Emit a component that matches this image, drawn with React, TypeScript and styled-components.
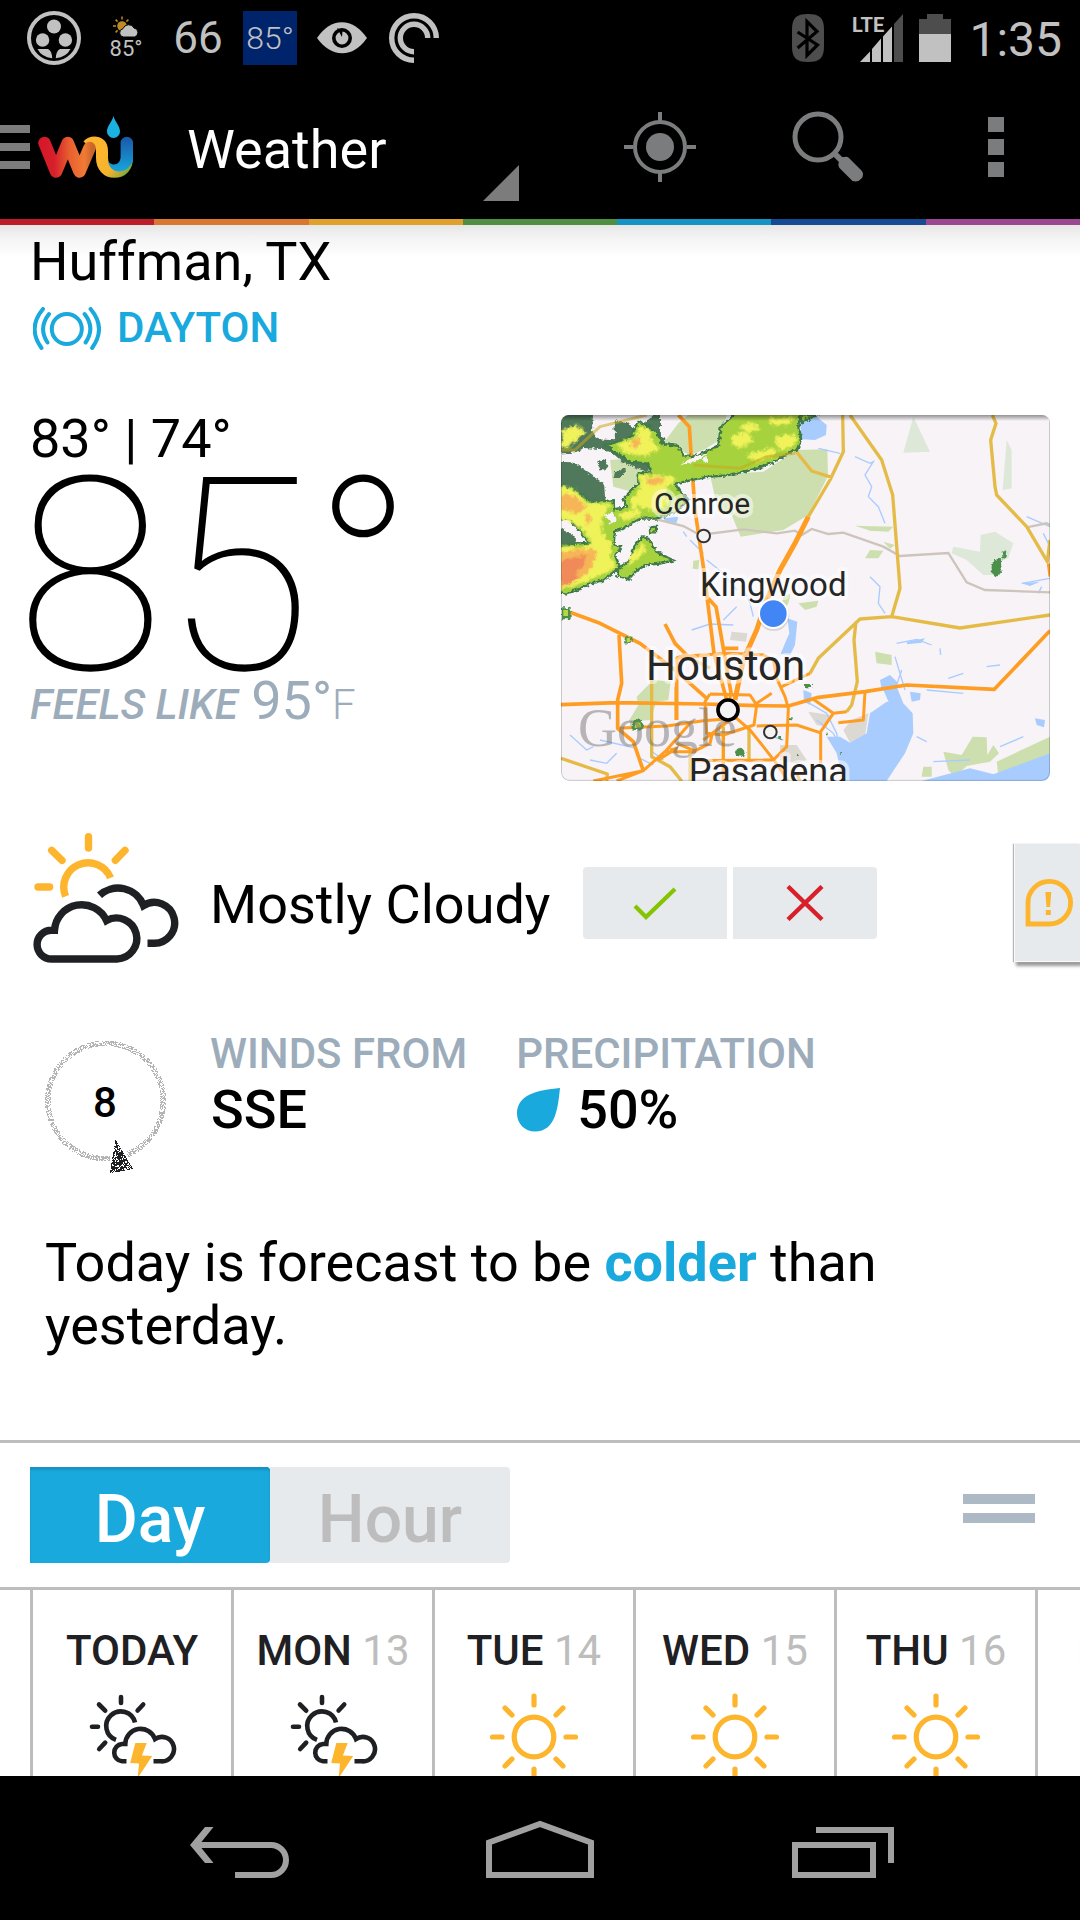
import React, { useState } from "react";
import styled, { createGlobalStyle } from "styled-components";

const GlobalStyle = createGlobalStyle`
  * { box-sizing: border-box; }
  html, body { margin: 0; padding: 0; }
  body {
    background: #fff;
    color: #000;
    font-family: Roboto, "Noto Sans", sans-serif;
  }
  button {
    font: inherit;
    color: inherit;
    border: 0;
    padding: 0;
    margin: 0;
    background: none;
    cursor: pointer;
  }
  svg { display: block; flex: none; }
  h1, h2, p, ul, dl, dd, dt { margin: 0; padding: 0; font-weight: inherit; }
`;

const color = {
  status: "#c1c1c1",
  dim: "#4d4d4d",
  action: "#7b7c7d",
  blue: "#19a9dd",
  slate: "#9dacba",
  panel: "#e6eaed",
  line: "#bdbdbd",
  ink: "#1f2023",
  sun: "#fdb52d",
  nav: "#a0a0a0",
};

/* ---------- layout ---------- */

const Page = styled.div`
  display: flex;
  flex-direction: column;
  height: 100vh;
  overflow: hidden;
`;

const StatusBar = styled.div`
  flex: none;
  display: flex;
  align-items: center;
  justify-content: space-between;
  height: 75px;
  padding: 0 18px 0 27px;
  background: #000;
  color: ${color.status};
`;

const Notifications = styled.div`
  display: flex;
  align-items: center;
  gap: 18px;
`;

const StatusSlot = styled.div<{ $fill?: string }>`
  display: flex;
  flex-direction: column;
  align-items: center;
  justify-content: center;
  width: 54px;
  height: 54px;
  background: ${(p) => p.$fill ?? "transparent"};
`;

const StatusText = styled.span<{ $size: number; $weight?: number }>`
  font-size: ${(p) => p.$size}px;
  line-height: ${(p) => p.$size}px;
  font-weight: ${(p) => p.$weight ?? 400};
  white-space: nowrap;
`;

const SystemIcons = styled.div`
  display: flex;
  align-items: center;
  gap: 16px;
`;

const BluetoothSlot = styled.div`
  margin-right: 12px;
`;

const Clock = styled.time`
  padding: 4px 0 0 2px;
  font-size: 48px;
  line-height: 48px;
`;

const AppBar = styled.header`
  flex: none;
  display: flex;
  height: 144px;
  background: #000;
  color: #fff;
`;

const HomeButton = styled.button`
  display: flex;
  align-items: center;
  gap: 8px;
  width: 187px;
`;

const Spinner = styled.button`
  flex: 1;
  display: flex;
  align-items: center;
  justify-content: space-between;
  margin-right: 57px;
`;

const SpinnerTitle = styled.span`
  padding-top: 5px;
  font-size: 54px;
  line-height: 64px;
`;

const SpinnerMark = styled.span`
  align-self: flex-end;
  margin-bottom: 18px;
  border-left: 36px solid transparent;
  border-bottom: 36px solid #7c7c7c;
`;

const Action = styled.button`
  flex: none;
  display: flex;
  align-items: center;
  justify-content: center;
  width: 168px;
  color: ${color.action};
`;

const Rainbow = styled.div`
  flex: none;
  display: flex;
  height: 6px;
`;

const Stripe = styled.span<{ $color: string }>`
  flex: 1;
  background: ${(p) => p.$color};
`;

const Main = styled.main`
  flex: 1;
  min-height: 0;
  overflow: hidden;
  background: linear-gradient(#e6e6e6, #f3f3f3 12px, #fff 32px);
`;

const Place = styled.section`
  padding: 5px 30px 0;
`;

const PlaceName = styled.h1`
  font-size: 54px;
  line-height: 64px;
`;

const Station = styled.a`
  display: flex;
  align-items: center;
  gap: 16px;
  width: max-content;
  margin-top: 12px;
  padding-left: 3px;
  font-size: 42px;
  line-height: 44px;
  font-weight: 500;
  color: ${color.blue};
  text-decoration: none;
`;

const Current = styled.section`
  display: flex;
  justify-content: space-between;
  align-items: flex-start;
  padding: 57px 30px 0;
`;

const HighLow = styled.p`
  font-size: 54px;
  line-height: 64px;
`;

/* The hanging indent cancels the wide side bearing of the first digit. */
const Temperature = styled.p`
  margin-top: 6px;
  font-size: 270px;
  line-height: 200px;
  font-weight: 100;
  text-indent: -14px;
`;

const FeelsLike = styled.p`
  font-size: 54px;
  line-height: 48px;
  color: ${color.slate};
`;

const FeelsLabel = styled.em`
  font-size: 42px;
  font-weight: 500;
`;

const Unit = styled.span`
  font-size: 42px;
  font-weight: 300;
`;

const MapButton = styled.button`
  margin-top: 8px;
  border-radius: 8px;
  overflow: hidden;
`;

const Conditions = styled.section`
  display: flex;
  align-items: center;
  height: 192px;
  padding: 52px 0 0 30px;
`;

const LeadColumn = styled.div`
  flex: none;
  align-self: flex-start;
  width: 180px;
`;

const Sky = styled.h2`
  padding-top: 4px;
  margin-right: 33px;
  font-size: 54px;
  line-height: 64px;
`;

const Votes = styled.div`
  display: flex;
  gap: 6px;
`;

const Vote = styled.button`
  display: flex;
  align-items: center;
  justify-content: center;
  width: 144px;
  height: 72px;
  background: ${color.panel};

  &:first-child { border-radius: 4px 0 0 4px; }
  &:last-child { border-radius: 0 4px 4px 0; }
`;

const AlertTab = styled.button`
  display: flex;
  align-items: center;
  width: 66px;
  height: 118px;
  margin-left: auto;
  padding-left: 10px;
  border-left: 1px solid #fafafa;
  border-bottom: 1px solid #fafafa;
  background: ${color.panel};
  box-shadow: -1px 0 1px #b5b5b5, 2px 4px 3px rgba(0, 0, 0, 0.4);
`;

const Details = styled.section`
  display: flex;
  align-items: flex-start;
  padding: 57px 30px 0;
`;

const CompassColumn = styled(LeadColumn)`
  padding: 10px 0 0 15px;
`;

const Facts = styled.dl`
  display: flex;
  gap: 49px;
`;

const FactLabel = styled.dt`
  font-size: 42px;
  line-height: 48px;
  font-weight: 500;
  color: ${color.slate};
`;

const FactValue = styled.dd`
  display: flex;
  align-items: center;
  gap: 16px;
  padding-left: 1px;
  font-size: 54px;
  line-height: 64px;
  font-weight: 500;
`;

const Forecast = styled.p`
  padding: 57px 45px 83px;
  font-size: 54px;
  line-height: 63px;
`;

const Change = styled.strong`
  font-weight: 700;
  color: ${color.blue};
`;

const RangeBar = styled.section`
  display: flex;
  align-items: center;
  justify-content: space-between;
  padding: 24px 45px 24px 30px;
  border-top: 3px solid ${color.line};
  border-bottom: 3px solid ${color.line};
`;

const Tabs = styled.div`
  display: flex;
`;

const Tab = styled.button<{ $active: boolean }>`
  width: 240px;
  height: 96px;
  padding-top: 9px;
  border-radius: 0 4px 4px 0;
  font-size: 66px;
  line-height: 78px;
  font-weight: 500;
  color: ${(p) => (p.$active ? "#fff" : color.line)};
  background: ${(p) => (p.$active ? color.blue : color.panel)};
  box-shadow: ${(p) => (p.$active ? "inset 0 3px 2px #1791c2" : "none")};
`;

const Handle = styled.button`
  display: grid;
  gap: 9px;
  width: 72px;
  margin-bottom: 14px;
`;

const HandleBar = styled.span`
  height: 10px;
  background: #adbac6;
`;

const Days = styled.ul`
  display: flex;
  overflow: hidden;
  padding-left: 30px;
  list-style: none;
`;

const Day = styled.li`
  flex: 0 0 201px;
  display: flex;
  flex-direction: column;
  align-items: center;
  gap: 17px;
  padding: 37px 0 54px;
  border-left: 3px solid ${color.line};
`;

const DayName = styled.span`
  font-size: 42px;
  line-height: 48px;
  font-weight: 500;
  color: ${color.ink};
  white-space: nowrap;
`;

const DayNumber = styled.span`
  font-weight: 400;
  color: ${color.line};
`;

const NavBar = styled.nav`
  flex: none;
  display: flex;
  height: 144px;
  padding: 0 90px;
  background: #000;
`;

const NavButton = styled.button`
  flex: 1;
  display: flex;
  align-items: center;
  justify-content: center;
`;

/* ---------- icons ---------- */

const ReelIcon = () => (
  <svg width="54" height="54" viewBox="0 0 54 54" fill={color.status}>
    <circle cx="27" cy="27" r="25" fill="none" stroke={color.status} strokeWidth="4" />
    <circle cx="27" cy="15.5" r="7" />
    <circle cx="15.6" cy="29" r="6.7" />
    <circle cx="38.4" cy="29" r="6.7" />
    <path d="M10.5 38H21q4 2 4.200 9.300Q14.500 46 10.500 38Z" />
    <path d="M43.500 38H33q-4 2-4.200 9.300Q39.500 46 43.500 38Z" />
  </svg>
);

const MiniWeatherIcon = () => (
  <svg width="26" height="22" viewBox="0 0 26 22">
    <circle cx="9" cy="10" r="4.800" fill="#c08a22" />
    <path
      d="M9 .5v3M2.600 3.600l2 2M0 10h3M15.400 3.600l-2 2M2.600 16.400l2-2"
      stroke="#c08a22"
      strokeWidth="1.500"
    />
    <path
      d="M10.500 21a4.200 4.200 0 0 1-.5-8.300 6 6 0 0 1 11-.7 4.600 4.600 0 0 1 .5 9Z"
      fill={color.status}
      stroke="#000"
    />
  </svg>
);

const EyeIcon = () => (
  <svg width="54" height="54" viewBox="0 0 54 54">
    <path d="M2 27Q13 11 27 11.300T52 27Q41 42.500 27 42.300T2 27Z" fill={color.status} />
    <circle cx="27" cy="27" r="8.200" fill={color.status} stroke="#000" strokeWidth="3.600" />
    <path d="M22 17l5 9 .5-6" fill="#000" />
  </svg>
);

const SwirlIcon = () => (
  <svg width="54" height="54" viewBox="0 0 54 54" fill="none" stroke={color.status} strokeWidth="5.400">
    <path d="M27 49.300A22.300 22.300 0 1 1 49.300 27" />
    <path d="M27 40.700A13.700 13.700 0 1 1 40.700 27" />
  </svg>
);

const BluetoothIcon = () => (
  <svg width="32" height="48" viewBox="0 0 32 48">
    <path d="M16 0C28 0 32 4 32 16v16c0 12-4 16-16 16S0 44 0 32V16C0 4 4 0 16 0Z" fill={color.dim} />
    <path d="M5.600 18 25.500 31 15 41.500v-34L25 17.500 5.600 34" fill="none" stroke="#000" strokeWidth="3.200" />
  </svg>
);

const SignalIcon = () => (
  <svg width="51" height="48" viewBox="0 0 51 48" fill={color.status}>
    <path d="M8 48 18 37.500V48ZM20 35l9-10.500V48h-9ZM31 22.500 40 12.500V48h-9Z" />
    <path d="M42 10 51 0v48h-9Z" fill={color.dim} />
    <text x="0" y="18" fontSize="20" fontWeight="700" fontFamily="Roboto, sans-serif">
      LTE
    </text>
  </svg>
);

const BatteryIcon = () => (
  <svg width="32" height="48" viewBox="0 0 32 48">
    <path d="M8 0h16v5h8v43H0V5h8Z" fill={color.dim} />
    <path d="M0 20h32v28H0Z" fill={color.status} />
  </svg>
);

const MenuLines = () => (
  <svg width="30" height="44" viewBox="0 0 30 44" fill="#7c7c7c">
    <path d="M0 0h30v8H0ZM0 18h30v8H0ZM0 36h30v8H0Z" />
  </svg>
);

const LogoIcon = () => (
  <svg width="96" height="78" viewBox="0 -8 96 78" fill="none" strokeLinecap="round" strokeLinejoin="round">
    <defs>
      <linearGradient id="wu-w" gradientUnits="userSpaceOnUse" x1="4" y1="0" x2="54" y2="0">
        <stop offset="0" stopColor="#d7182a" />
        <stop offset=".25" stopColor="#d7202c" />
        <stop offset=".55" stopColor="#e8602f" />
        <stop offset=".85" stopColor="#f07a35" />
        <stop offset="1" stopColor="#c9672a" />
      </linearGradient>
      <linearGradient id="wu-u" gradientUnits="userSpaceOnUse" x1="64" y1="30" x2="94" y2="54">
        <stop offset="0" stopColor="#fdb52d" />
        <stop offset=".55" stopColor="#f5b32e" />
        <stop offset=".85" stopColor="#a9a935" />
        <stop offset="1" stopColor="#5fae45" />
      </linearGradient>
      <linearGradient id="wu-b" x1="0" y1="0" x2="0" y2="1">
        <stop offset="0" stopColor="#1b57a8" />
        <stop offset="1" stopColor="#16a5dc" />
      </linearGradient>
    </defs>
    <path
      d="M50 29.500C53 26 64 23.500 64 35v7c0 8 5 13.800 12.500 13.800S89 50.500 89 42"
      stroke="url(#wu-u)"
      strokeWidth="12"
      strokeLinecap="butt"
    />
    <path d="M6.500 27 18 55.500 29.800 27 41.500 55.500 51.500 32" stroke="url(#wu-w)" strokeWidth="12.500" />
    <path
      d="M82.600 27a6.200 6.200 0 0 1 12.400 0v17.500C93 51 87 55.500 81 55.500 75 55.500 71 51 70 45c3 5.500 12.600 4.500 12.600-4Z"
      fill="url(#wu-b)"
    />
    <path d="M75.500 0c1.500 6 6.500 10 6.500 15.500a6.400 6.400 0 0 1-13 0C69 10 74 6 75.500 0Z" fill="#1bb2e2" />
  </svg>
);

const LocateIcon = () => (
  <svg width="72" height="72" viewBox="0 0 72 72" fill="none" stroke="currentColor" strokeWidth="4">
    <circle cx="36" cy="36" r="25" />
    <circle cx="36" cy="36" r="14" fill="currentColor" stroke="none" />
    <path d="M36 1v9M36 62v9M0 36h9M63 36h9" />
  </svg>
);

const SearchIcon = () => (
  <svg width="72" height="72" viewBox="0 0 72 72" fill="none" stroke="currentColor">
    <circle cx="26" cy="26" r="23" strokeWidth="5" />
    <path d="M42 42l8 8" strokeWidth="6" />
    <path
      d="M47 51q-1-5 5-5 3-1 5 1l12.500 12.500q3 4 0 8t-9 2.500L47.500 57q-2-3-.5-6Z"
      fill="currentColor"
      stroke="none"
    />
  </svg>
);

const OverflowIcon = () => (
  <svg width="16" height="60" viewBox="0 0 16 60" fill="currentColor">
    <path d="M0 0h16v15H0ZM0 22h16v16H0ZM0 45h16v15H0Z" />
  </svg>
);

const StationIcon = () => (
  <svg width="68" height="43" viewBox="0 0 68 43" fill="none" stroke={color.blue} strokeWidth="4" strokeLinecap="round">
    <circle cx="33.800" cy="22" r="15" />
    <path d="M16 7Q5 21 14.500 35.500M10 2Q-6 21 8.500 41M51.600 7q11 14 1 28.500M57.600 2q16 19 1.500 39" />
  </svg>
);

const MostlyCloudyIcon = () => (
  <svg width="150" height="130" viewBox="0 0 150 130" fill="none" strokeWidth="7.400">
    <path d="M80.500 44.800A24.200 24.200 0 1 0 35.600 63.300" stroke={color.sun} />
    <path
      d="M58.500 3.700V15M8 54h11.600M21.700 17.300l10.300 10M95 17.300l-9.600 10"
      stroke={color.sun}
      strokeLinecap="round"
    />
    <path
      d="M21.500 126a14.400 14.400 0 0 1 0-28.800h3A27.300 27.300 0 0 1 76.500 87.500 20.500 20.500 0 1 1 87 126Z"
      stroke={color.ink}
    />
    <path d="M69.500 62.300A27.300 27.300 0 0 1 113.500 72.500 20.400 20.400 0 1 1 123 110.200h-5.500" stroke={color.ink} />
  </svg>
);

const CheckIcon = () => (
  <svg width="44" height="36" viewBox="0 0 44 36" fill="none" stroke="#84c400" strokeWidth="4.200">
    <path d="M2 21 13 32 42 4" />
  </svg>
);

const CrossIcon = () => (
  <svg width="38" height="36" viewBox="0 0 38 36" fill="none" stroke="#d8202a" strokeWidth="4.400">
    <path d="M2 1.500 36 34.500M36 1.500 2 34.500" />
  </svg>
);

const AlertIcon = () => (
  <svg width="48" height="48" viewBox="0 0 48 48">
    <path d="M3 45V24A21.300 21.300 0 1 1 24.300 45Z" fill="none" stroke={color.sun} strokeWidth="4.800" />
    <path d="M20.300 13h6l-1.200 15h-3.600ZM20.800 31h5v5h-5Z" fill={color.sun} />
  </svg>
);

const DropIcon = () => (
  <svg width="44" height="44" viewBox="0 0 44 44" fill={color.blue}>
    <path d="M43 0C41 19 39 43.500 18 43.500 8 43.500 0 36 0 25.500 0 7 20 2 43 0Z" />
  </svg>
);

const StormIcon = () => (
  <svg width="90" height="90" viewBox="0 0 90 90" fill="none" stroke={color.ink} strokeWidth="4.600">
    <path d="M48 30.500A14.600 14.600 0 1 0 29 47.800" />
    <path
      d="M34 5v6M5 34.700h6M12 12.500l6.200 6.200M56.200 12.500l-5.600 6M12.200 57l6-6.300"
      strokeLinecap="round"
    />
    <path d="M39.500 69.300H35A8.700 8.700 0 0 1 35 52h3.300A15.300 15.300 0 0 1 68 47 12.200 12.200 0 1 1 74 69.300h-7.500" />
    <path d="M48.300 51h11.400l-4.800 12.500 10.300.5L50.700 86 52 71.500 43.200 71Z" fill={color.sun} stroke="none" />
  </svg>
);

const SunIcon = () => (
  <svg width="90" height="90" viewBox="0 0 90 90" fill="none" stroke={color.sun} strokeWidth="5.200">
    <circle cx="45" cy="45" r="19.800" />
    <path
      d="M45 4v9M45 77v9M3.500 45h9.500M77 45h9.500M16 16l7 7M67 67l7 7M74 16l-7 7M23 67l-7 7"
      strokeLinecap="round"
    />
  </svg>
);

const BackIcon = () => (
  <svg width="100" height="60" viewBox="0 -9 100 60">
    <path d="M0 18 15 0h8.500L9 18l14.500 18H15Z" fill={color.nav} />
    <path d="M7 18h74a15 15 0 0 1 0 30H45" fill="none" stroke={color.nav} strokeWidth="6" />
  </svg>
);

const HomeIcon = () => (
  <svg width="108" height="60" viewBox="0 -3 108 60" fill="none" stroke={color.nav} strokeWidth="6">
    <path d="M3 21.500 54 3l51 18.500V54H3Z" />
  </svg>
);

const RecentsIcon = () => (
  <svg width="108" height="60" viewBox="-6 -9 108 60" fill="none" stroke={color.nav} strokeWidth="6">
    <path d="M3 18h78v30H3ZM24 3h75v33" />
  </svg>
);

/* ---------- wind compass: a speckled ring with a speckled pointer ---------- */

const makeNoise = (seed: number) => () => {
  seed = (seed * 16807) % 2147483647;
  return seed / 2147483647;
};

const speckle = (inside: (x: number, y: number) => boolean, density: number, seed: number) => {
  const next = makeNoise(seed);
  let d = "";
  for (let y = 0; y < 134; y += 1) {
    for (let x = 0; x < 122; x += 1) {
      if (next() < density && inside(x, y)) d += `M${x} ${y}h1v1h-1z`;
    }
  }
  return d;
};

const ringPixels = speckle(
  (x, y) => {
    const r = Math.hypot(x - 60, y - 60.5);
    return r > 55 && r < 60.5 && !(y > 100 && x > 64 && x < 82);
  },
  0.55,
  4211,
);

const pointerPixels = speckle(
  (x, y) => y >= 100 && y <= 133 - (x - 64) * 0.2 && x >= 70 - (y - 100) * 0.18 && x <= 70.5 + (y - 100) * 0.6,
  0.68,
  977,
);

const Compass = ({ speed }: { speed: number }) => (
  <svg width="122" height="134" viewBox="0 0 122 134" shapeRendering="crispEdges">
    <path d={ringPixels} fill="#b4b4b4" />
    <path d={pointerPixels} fill={color.ink} />
    <text
      x="60"
      y="77"
      textAnchor="middle"
      fontFamily="Roboto, sans-serif"
      fontSize="42"
      fontWeight="500"
    >
      {speed}
    </text>
  </svg>
);

/* ---------- radar map ---------- */

const MapLabel = styled.text<{ $size: number }>`
  font-family: Roboto, "Noto Sans", sans-serif;
  font-size: ${(p) => p.$size}px;
  fill: #262626;
  stroke: rgba(255, 255, 255, 0.5);
  stroke-width: 24px;
  stroke-linejoin: round;
  paint-order: stroke;
`;

const Watermark = styled.text`
  font-family: "Liberation Serif", serif;
  font-size: 162px;
  fill: rgba(110, 110, 110, 0.48);
`;

const RadarMap = () => (
  <svg width="489" height="366" viewBox="33 45 1467 1098" role="img" aria-label="Radar map of the Houston area">
    <defs>
      <filter id="ragged" x="-5%" y="-5%" width="110%" height="110%">
        <feTurbulence type="fractalNoise" baseFrequency="0.09" numOctaves="3" seed="4" result="n" />
        <feDisplacementMap in="SourceGraphic" in2="n" scale="15" xChannelSelector="R" yChannelSelector="G" />
      </filter>
      <filter id="soft" x="-20%" y="-20%" width="140%" height="140%">
        <feGaussianBlur stdDeviation="3" result="b" />
        <feTurbulence type="fractalNoise" baseFrequency="0.07" numOctaves="3" seed="9" result="n" />
        <feDisplacementMap in="b" in2="n" scale="22" xChannelSelector="R" yChannelSelector="G" />
      </filter>
      <linearGradient id="edge" x1="0" y1="0" x2="0" y2="1">
        <stop offset="0" stopColor="#000" stopOpacity=".4" />
        <stop offset="1" stopColor="#000" stopOpacity="0" />
      </linearGradient>
    </defs>

    <rect x="33" y="45" width="1467" height="1098" fill="#f7f3f7" />

    {/* parks */}
    <g fill="#cddfae">
      <path d="M385 70 415 45H530L510 120 460 150 420 165 340 130ZM180 180 330 170 400 210 300 290 190 260ZM480 225 640 215 740 150 832 148 834 228 775 345 700 390 572 410 545 345 505 335Z" />
      <path d="M310 840 362 845 355 900 320 905 300 960 235 965 265 915 260 890ZM1180 1055 1235 1065 1268 1010 1310 1012 1312 1065 1330 1035 1347 1060 1320 1085 1250 1098 1215 1130 1195 1110ZM1340 1085 1500 1010V1065L1345 1125ZM1120 1100h25v30h-30Z" />
      <path d="M945 475 960 450 1000 452 985 475ZM975 755 1025 765V795L980 790ZM915 377 1030 380 1015 395 960 392ZM430 482 448 480 445 508 428 506ZM745 610 805 602 800 620 765 630ZM1000 425 1035 435 1020 446ZM700 590 722 580 715 610 690 650Z" />
    </g>
    <g fill="#dde8d8">
      <path d="M1090 50 1140 155 1060 158ZM1370 120 1385 150V265L1358 270ZM1210 440 1290 455 1292 405 1335 395 1390 430 1375 475 1340 490 1345 525 1300 525 1250 480 1205 460Z" />
    </g>
    <g fill="#dcd8d2">
      <path d="M775 935 840 945 830 980 800 975ZM905 960 955 940 945 1010 900 1028 880 990ZM690 1035 740 1035 770 1080 740 1090 690 1080ZM545 695 592 700 588 725 540 720Z" />
    </g>

    {/* water */}
    <g fill="#a9ccff">
      <path d="M750 70 800 50 830 75 828 105 795 120 755 118ZM712 655 742 665 735 735 720 765 692 762 705 730 718 700ZM870 1010 900 1028 950 1000 960 940 1010 905 1060 910 1088 940 1090 1000 1065 1060 1035 1105 1010 1143H880L860 1060 830 1010ZM1115 1143 1260 1105 1340 1125 1430 1095 1500 1065V1143ZM1080 875 1112 880 1110 900 1085 905ZM990 840 1020 825 1045 850 1025 870 995 868ZM1310 1130 1500 1060V1143H1290ZM340 355 385 350 380 368 352 370ZM760 870 785 880 780 915 762 905Z" />
      <path d="M1000 870 1040 860 1060 910 1020 915ZM1455 955 1485 960 1482 982 1460 975ZM1070 725 1125 715 1115 728 1072 733ZM1415 550 1470 545 1440 558Z" />
    </g>
    <g fill="none" stroke="#a9ccff" strokeWidth="4">
      <path d="M805 145 870 160M915 170 960 190 970 185 945 225 965 260 955 290 985 320 1005 370M960 530 990 560 985 610 1005 640M425 690 480 672 550 675M575 555 600 610 610 650M470 480 520 520 560 570M1040 730 1100 718 1145 735M1170 745 1172 765M1035 770 1050 820 1065 870M1055 810 1038 860M1195 835 1240 820M1310 800 1350 795M1130 870 1240 880M1430 350 1500 380M1480 400 1500 440M1415 550 1500 535M1465 580 1475 560M150 1020 260 1045M60 1005 110 1050 130 1040M120 1080 170 1090 200 1060M770 905 830 940 860 1000 870 1060M1100 1010 1130 1025M400 395 410 410M1150 1085 1260 1080M1350 1040 1420 1010" />
      <path d="M640 1000 700 1020M870 1040 850 1000 800 960M300 1050l40 30M270 1075l40 20M420 420l40 40M560 620l-40 40" />
    </g>

    {/* county roads */}
    <g fill="none" stroke="#cdc5bb" strokeWidth="7">
      <path d="M320 358 400 378 450 405 580 388 680 400 735 392 755 405 785 387 835 402 880 398 1000 440 1050 468 1195 459 1250 547 1305 570 1500 577M1430 382 1490 370 1500 375M180 360 230 345 290 352" />
    </g>

    {/* highways */}
    <g fill="none" stroke="#e5bb48" strokeWidth="10" strokeLinejoin="round">
      <path d="M900 45 995 180 1028 285 1050 565 1025 650 930 657 805 775 780 820M1025 650 1230 684 1500 645M878 45 880 155 840 240 775 350M735 150 785 213 845 232M1327 45 1338 70 1322 120 1335 260 1340 285 1430 380 1492 485 1500 420M918 665 912 720 922 845 905 915 890 935M305 840V1070L360 1100 395 1143M378 860V960M597 985V1080M33 1075 172 1122 170 1143M520 980V1143M420 1060V1143M410 770 480 805" />
    </g>
    <g fill="none" stroke="#ff9c22" strokeWidth="11" strokeLinejoin="round">
      <path d="M385 45 418 80 425 190 435 330 460 500 492 760 530 900M470 590 498 620 520 745 545 890M525 745h40" />
      <path d="M60 637 150 670 270 730 375 810 470 895M345 672 375 730 410 765 380 775V960M207 705 215 850 203 900V985L250 1025 280 1112M33 914 200 908 460 912 620 917 715 918 800 893 945 875 1070 855 1333 868 1500 692" />
      <path d="M775 350 735 430 690 510 650 600 620 690 580 780 555 900" strokeWidth="15" />
      <path d="M410 768 540 760 640 765 670 780 680 835 705 890 715 925 710 1040 670 1080 430 1082M480 882 600 885 620 915 612 975 520 1005 470 1000 465 905 480 882M620 910 665 880M695 860 780 820M790 898 850 940 810 998 740 975 620 978M850 940 890 935M945 875 940 960 865 968M812 998V1090M200 985 350 978 460 962 560 955 600 990 640 1040 675 1085 715 1143M130 1143 280 1112 350 1050 420 970M345 1055 430 1055 480 1030 487 1000M325 1080 380 1045 360 1050M520 1000V1143M380 775 480 765M380 1030 440 1055M1495 490 1500 530M750 1143 740 1120M200 1143 280 1112M540 885V960L460 1020" strokeWidth="9" />
    </g>

    {/* rain */}
    <g transform="translate(30 36)">
      <g filter="url(#ragged)">
        <path
          d="M-10-10H100L96 55 112 82 165 85 163 25 200 30 225 52 262 25 300 0V60L320 95 260 180 190 152 165 130 130 112 70 108 50 122-10 125ZM-10 150H20L45 152 85 182 132 215 136 265 110 280-10 250ZM-10 342 42 370 52 408-10 415ZM112 150 135 142 145 165 122 176ZM160 198 165 180 195 166 198 180 178 198Z"
          fill="#50795a"
        />
        <path
          d="M135 100 175 88 212 75 235 30 262 40 298 70 305 95 355 102 370 130 410 132 475 100 482 45 530 0H722L715 45 724 80 712 110 640 150 590 170 500 190 440 195 345 215 362 240 385 262 350 300 290 320 240 320 190 350 165 358 160 400 185 405 165 430 180 465 130 505 90 515 60 530 20 545-10 540V400L50 395 85 392 60 360 30 325-10 322V215L40 228 90 270 160 265 163 292 200 285 188 262 235 215 233 185 270 180 265 155 212 150 170 122ZM175 470 215 440 222 405 245 375 265 380 290 420 340 445 300 455 255 460 225 480 205 502 172 490ZM270 345h18v16h-18ZM720 5 765 12 725 30Z"
          fill="#a6d23e"
          stroke="#417a4c"
          strokeWidth="7"
        />
      </g>
      <path
        d="M430 136h14v16h-14ZM130 310 160 300 170 322 152 338 145 322ZM360 160 400 135 445 122 405 150ZM0 322 30 326 82 392 50 378 0 345ZM20 125 60 118 75 132 62 150 40 148 30 135Z"
        fill="#f7f3f7"
        filter="url(#ragged)"
      />
      <g filter="url(#soft)" fill="#f0f25a">
        <path d="M170 95 225 80 240 45 268 55 275 85 300 110 260 130 225 130 190 118ZM520 70 560 60 580 85 548 108 515 100ZM535 45 570 30 600 50 570 62ZM620 20 700 15 690 35 640 40ZM645 75 700 65 712 85 690 112 655 115ZM560 130 640 105 650 125 590 150ZM240 190 330 190 350 205 310 240 330 280 280 300 250 285 215 290 210 265 240 235Z" />
        <path d="M0 220 45 235 85 275 150 275 130 310 125 360 150 390 155 440 170 465 120 490 60 515 0 535V400L60 408 100 395 60 345 0 315ZM215 425 250 390 262 410 235 440 205 460ZM5 55 50 40 75 60 40 95 5 110ZM170 310 230 290 250 305 200 325Z" />
      </g>
      <g filter="url(#soft)" fill="#f6b557">
        <path d="M215 85 235 78 242 95 225 112 212 100ZM255 200 315 195 305 215 265 222ZM0 245 40 250 80 280 55 305 0 290ZM0 425 50 410 110 415 105 445 85 480 50 505 0 530ZM80 300 95 320 75 345Z" />
        <path d="M15 440 80 430 75 460 50 475 55 500 20 520 0 515V455Z" fill="#f08a58" />
      </g>
    </g>
    <g fill="none" stroke="#c7aa1c" strokeOpacity=".55" strokeWidth="9" strokeLinejoin="round">
      <path d="M33 150 75 150 150 80 290 45M430 195 570 205 650 170 735 160" />
    </g>
    <g fill="#4b8f4b" filter="url(#ragged)">
      <path d="M1330 480 1352 475 1355 510 1340 532 1322 515ZM1355 455 1372 450 1370 470 1358 480ZM36 622h26v36h-26ZM225 708 248 710 240 732 222 730ZM245 965 265 955 285 980 270 992 245 988ZM555 1050 572 1042 590 1058 575 1070 558 1068ZM762 852h24v10h-24ZM720 955h8v6h-8ZM738 1062h8v8h-8ZM825 998h8v8h-8ZM685 1008h8v8h-8ZM868 1056h8v6h-8Z" />
    </g>
    <g fill="#b9d643">
      <path d="M40 630h14v18H40ZM230 714h10v12h-10ZM256 966l14 2 4 14-20 2Z" />
    </g>

    {/* towns */}
    <Watermark x="84" y="1038">Google</Watermark>
    <g fill="#f3f3f3" stroke="#333" strokeWidth="6">
      <circle cx="461" cy="408" r="19" />
      <circle cx="661" cy="996" r="19" />
      <circle cx="534" cy="930" r="30" stroke="#000" strokeWidth="11" />
    </g>
    <MapLabel x="312" y="343" $size={90}>Conroe</MapLabel>
    <MapLabel x="450" y="588" $size={99}>Kingwood</MapLabel>
    <MapLabel x="288" y="840" $size={126}>Houston</MapLabel>
    <MapLabel x="416" y="1152" $size={108}>Pasadena</MapLabel>

    {/* current position */}
    <circle cx="671" cy="646" r="47" fill="#000" opacity=".12" />
    <circle cx="670" cy="641" r="43" fill="#4285f4" stroke="#fff" strokeWidth="6" />

    <rect x="33" y="45" width="1467" height="18" fill="url(#edge)" />
    <rect x="34.500" y="30" width="1464" height="1111" rx="24" fill="none" stroke="#000" strokeOpacity=".18" strokeWidth="3" />
  </svg>
);

/* ---------- page ---------- */

const stripes = ["#be1c28", "#d97730", "#dfa02c", "#4f8f42", "#1594c4", "#164a92", "#9b4690"];

const days = [
  { name: "TODAY", date: "", icon: StormIcon },
  { name: "MON", date: "13", icon: StormIcon },
  { name: "TUE", date: "14", icon: SunIcon },
  { name: "WED", date: "15", icon: SunIcon },
  { name: "THU", date: "16", icon: SunIcon },
  { name: "FRI", date: "17", icon: SunIcon },
];

export default function App() {
  const [range, setRange] = useState("Day");

  return (
    <Page>
      <GlobalStyle />
      <StatusBar>
        <Notifications>
          <StatusSlot><ReelIcon /></StatusSlot>
          <StatusSlot>
            <MiniWeatherIcon />
            <StatusText $size={22}>85°</StatusText>
          </StatusSlot>
          <StatusSlot><StatusText $size={44}>66</StatusText></StatusSlot>
          <StatusSlot $fill="#00246b"><StatusText $size={32} $weight={300}>85°</StatusText></StatusSlot>
          <StatusSlot><EyeIcon /></StatusSlot>
          <StatusSlot><SwirlIcon /></StatusSlot>
        </Notifications>
        <SystemIcons>
          <BluetoothSlot><BluetoothIcon /></BluetoothSlot>
          <SignalIcon />
          <BatteryIcon />
          <Clock>1:35</Clock>
        </SystemIcons>
      </StatusBar>

      <AppBar>
        <HomeButton aria-label="Open menu">
          <MenuLines />
          <LogoIcon />
        </HomeButton>
        <Spinner aria-haspopup="listbox">
          <SpinnerTitle>Weather</SpinnerTitle>
          <SpinnerMark />
        </Spinner>
        <Action aria-label="Use my location"><LocateIcon /></Action>
        <Action aria-label="Search"><SearchIcon /></Action>
        <Action aria-label="More options"><OverflowIcon /></Action>
      </AppBar>
      <Rainbow>
        {stripes.map((c) => <Stripe key={c} $color={c} />)}
      </Rainbow>

      <Main>
        <Place>
          <PlaceName>Huffman, TX</PlaceName>
          <Station href="#station"><StationIcon />DAYTON</Station>
        </Place>

        <Current>
          <div>
            <HighLow>83° | 74°</HighLow>
            <Temperature>85°</Temperature>
            <FeelsLike>
              <FeelsLabel>FEELS LIKE</FeelsLabel> 95°<Unit>F</Unit>
            </FeelsLike>
          </div>
          <MapButton aria-label="Open radar map"><RadarMap /></MapButton>
        </Current>

        <Conditions>
          <LeadColumn><MostlyCloudyIcon /></LeadColumn>
          <Sky>Mostly Cloudy</Sky>
          <Votes>
            <Vote aria-label="Correct"><CheckIcon /></Vote>
            <Vote aria-label="Incorrect"><CrossIcon /></Vote>
          </Votes>
          <AlertTab aria-label="Report a hazard"><AlertIcon /></AlertTab>
        </Conditions>

        <Details>
          <CompassColumn><Compass speed={8} /></CompassColumn>
          <Facts>
            <div>
              <FactLabel>WINDS FROM</FactLabel>
              <FactValue>SSE</FactValue>
            </div>
            <div>
              <FactLabel>PRECIPITATION</FactLabel>
              <FactValue><DropIcon />50%</FactValue>
            </div>
          </Facts>
        </Details>

        <Forecast>
          Today is forecast to be <Change>colder</Change> than yesterday.
        </Forecast>

        <RangeBar>
          <Tabs role="tablist">
            {["Day", "Hour"].map((name) => (
              <Tab
                key={name}
                role="tab"
                aria-selected={range === name}
                $active={range === name}
                onClick={() => setRange(name)}
              >
                {name}
              </Tab>
            ))}
          </Tabs>
          <Handle aria-label="Drag to resize">
            <HandleBar />
            <HandleBar />
          </Handle>
        </RangeBar>

        <Days>
          {days.map(({ name, date, icon: Icon }) => (
            <Day key={name}>
              <DayName>
                {name}
                {date && <DayNumber> {date}</DayNumber>}
              </DayName>
              <Icon />
            </Day>
          ))}
        </Days>
      </Main>

      <NavBar>
        <NavButton aria-label="Back"><BackIcon /></NavButton>
        <NavButton aria-label="Home"><HomeIcon /></NavButton>
        <NavButton aria-label="Recent apps"><RecentsIcon /></NavButton>
      </NavBar>
    </Page>
  );
}
